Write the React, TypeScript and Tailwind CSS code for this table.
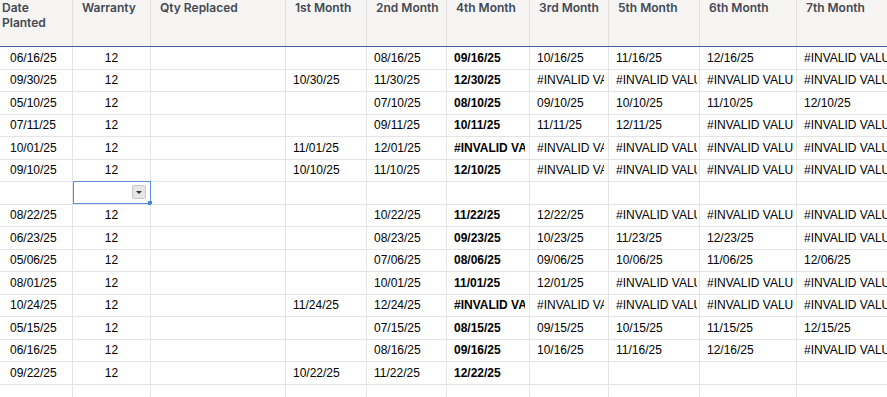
import React from 'react';

type Col = {
  label: string[];
  w: string;
  head: string;
  body: string;
};

const cols: Col[] = [
  { label: ['Date', 'Planted'], w: 'w-[73px]', head: 'pl-[2px]', body: 'pl-[10px] pr-[2px]' },
  { label: ['Warranty'], w: 'w-[78px]', head: 'pl-[9px]', body: 'justify-center' },
  { label: ['Qty Replaced'], w: 'w-[135px]', head: 'pl-[9px]', body: 'pl-[7px] pr-[2px]' },
  { label: ['1st Month'], w: 'w-[81px]', head: 'pl-[9px]', body: 'pl-[7px] pr-[2px]' },
  { label: ['2nd Month'], w: 'w-[80px]', head: 'pl-[9px]', body: 'pl-[7px] pr-[2px]' },
  { label: ['4th Month'], w: 'w-[83px]', head: 'pl-[9px]', body: 'pl-[7px] pr-[4px] font-bold' },
  { label: ['3rd Month'], w: 'w-[79px]', head: 'pl-[9px]', body: 'pl-[7px] pr-[4px]' },
  { label: ['5th Month'], w: 'w-[91px]', head: 'pl-[9px]', body: 'pl-[7px] pr-[2px]' },
  { label: ['6th Month'], w: 'w-[97px]', head: 'pl-[9px]', body: 'pl-[7px] pr-[2px]' },
  { label: ['7th Month'], w: 'w-[97px]', head: 'pl-[9px]', body: 'pl-[7px] pr-[2px]' },
];

const X = '#INVALID VALUE';

// null marks the row with the open dropdown
const rows: (string[] | null)[] = [
  ['06/16/25', '12', '', '', '08/16/25', '09/16/25', '10/16/25', '11/16/25', '12/16/25', X],
  ['09/30/25', '12', '', '10/30/25', '11/30/25', '12/30/25', X, X, X, X],
  ['05/10/25', '12', '', '', '07/10/25', '08/10/25', '09/10/25', '10/10/25', '11/10/25', '12/10/25'],
  ['07/11/25', '12', '', '', '09/11/25', '10/11/25', '11/11/25', '12/11/25', X, X],
  ['10/01/25', '12', '', '11/01/25', '12/01/25', X, X, X, X, X],
  ['09/10/25', '12', '', '10/10/25', '11/10/25', '12/10/25', X, X, X, X],
  null,
  ['08/22/25', '12', '', '', '10/22/25', '11/22/25', '12/22/25', X, X, X],
  ['06/23/25', '12', '', '', '08/23/25', '09/23/25', '10/23/25', '11/23/25', '12/23/25', X],
  ['05/06/25', '12', '', '', '07/06/25', '08/06/25', '09/06/25', '10/06/25', '11/06/25', '12/06/25'],
  ['08/01/25', '12', '', '', '10/01/25', '11/01/25', '12/01/25', X, X, X],
  ['10/24/25', '12', '', '11/24/25', '12/24/25', X, X, X, X, X],
  ['05/15/25', '12', '', '', '07/15/25', '08/15/25', '09/15/25', '10/15/25', '11/15/25', '12/15/25'],
  ['06/16/25', '12', '', '', '08/16/25', '09/16/25', '10/16/25', '11/16/25', '12/16/25', X],
  ['09/22/25', '12', '', '10/22/25', '11/22/25', '12/22/25', '', '', '', ''],
];

function DropdownCell() {
  return (
    <div className="absolute -top-[1px] left-0 -right-[1px] bottom-0 border border-[#5a8fd8] bg-white">
      <div className="absolute right-[4px] top-[3px] w-[14px] h-[14px] rounded-[2px] border border-[#c9c9c9] bg-[#e6e6e6] flex items-center justify-center">
        <div className="w-0 h-0 border-l-[3px] border-r-[3px] border-t-[3px] border-l-transparent border-r-transparent border-t-[#333]" />
      </div>
      <div className="absolute -right-[2px] -bottom-[2px] w-[4px] h-[4px] bg-[#4a86d8]" />
    </div>
  );
}

export default function App() {
  return (
    <div className="w-full h-[397px] overflow-hidden bg-white text-black font-['Liberation_Sans',Arial,sans-serif] text-[12px]">
      {/* header */}
      <div className="flex h-[47px] border-b border-[#3f5ea3] bg-[#f6f5f3] w-max">
        {cols.map((c, i) => (
          <div
            key={i}
            className={`${c.w} ${c.head} shrink-0 h-full border-r border-[#e2e0dd] pt-[1px] font-['Inter',sans-serif] font-semibold text-[12px] leading-[14.5px] text-[#434853]`}
          >
            {c.label.map(l => (
              <div key={l}>{l}</div>
            ))}
          </div>
        ))}
      </div>

      {/* body */}
      {rows.map((r, ri) => (
        <div key={ri} className="flex w-max h-[22.5px]">
          {cols.map((c, ci) => (
            <div
              key={ci}
              className={`${c.w} ${c.body} shrink-0 relative flex items-center h-full border-b border-r border-[#e4e4e4]`}
            >
              {r === null ? (
                ci === 1 && <DropdownCell />
              ) : (
                <div className="overflow-hidden whitespace-nowrap">{r[ci]}</div>
              )}
            </div>
          ))}
        </div>
      ))}

      <div className="flex w-max h-[22.5px]">
        {cols.map((c, ci) => (
          <div key={ci} className={`${c.w} shrink-0 h-full border-r border-[#e4e4e4]`} />
        ))}
      </div>
    </div>
  );
}
